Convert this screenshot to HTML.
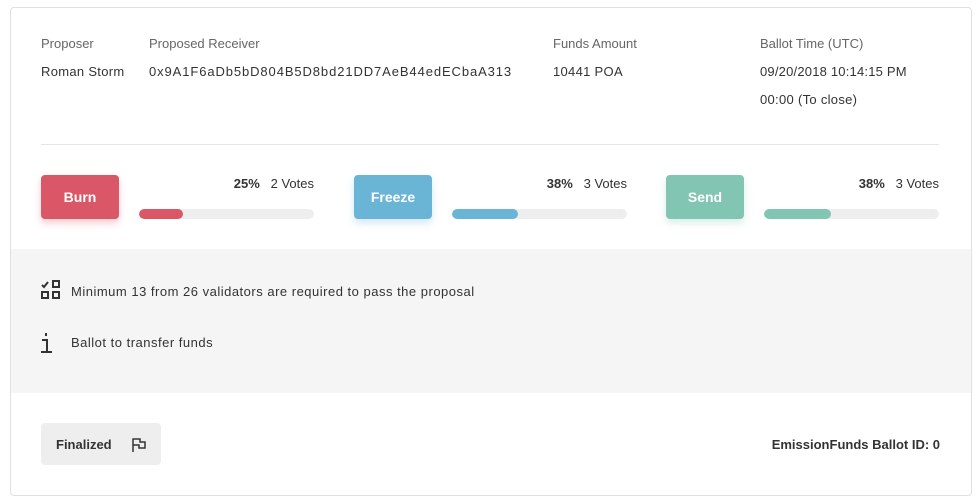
<!DOCTYPE html><html><head><style>
body{margin:0;background:#fff;font-family:"Liberation Sans",sans-serif;color:#333;width:979px;height:502px;position:relative;overflow:hidden}
.card{position:absolute;left:10px;top:7px;width:960px;height:487px;border:1px solid #e0e0e0;border-radius:4px;background:#fff;overflow:hidden}
.t{position:absolute;font-size:13px;white-space:nowrap}
.lbl{color:#666}
.btn{position:absolute;top:167px;width:78px;height:44px;border-radius:4px;color:#fff;font-weight:bold;font-size:14px;text-align:center;line-height:44px}
.bar{position:absolute;top:201px;width:175px;height:10px;border-radius:5px;background:#eee;overflow:hidden}
.bar div{height:10px;border-radius:5px}
.vt{position:absolute;top:168px;font-size:13px;text-align:right;width:175px}
</style></head><body><div class="card">
<div class="t lbl" style="left:30px;top:28px">Proposer</div>
<div class="t lbl" style="left:138px;top:28px">Proposed Receiver</div>
<div class="t lbl" style="left:542px;top:28px">Funds Amount</div>
<div class="t lbl" style="left:749px;top:28px">Ballot Time (UTC)</div>
<div class="t" style="left:30px;top:56px;letter-spacing:0.3px">Roman Storm</div>
<div class="t" style="left:138px;top:56px;letter-spacing:0.9px">0x9A1F6aDb5bD804B5D8bd21DD7AeB44edECbaA313</div>
<div class="t" style="left:542px;top:56px;letter-spacing:0.3px">10441 POA</div>
<div class="t" style="left:749px;top:56px;letter-spacing:0.2px">09/20/2018 10:14:15 PM</div>
<div class="t" style="left:749px;top:84px;letter-spacing:0.3px">00:00 (To close)</div>
<div style="position:absolute;left:30px;top:136px;width:898px;height:1px;background:#e5e5e5"></div>
<div class="btn" style="left:30px;background:#d95767;box-shadow:0 4px 8px rgba(217,87,103,.3)">Burn</div>
<div class="vt" style="left:128px"><b>25%</b>&nbsp;&nbsp; 2 Votes</div>
<div class="bar" style="left:128px"><div style="width:44px;background:#d95767"></div></div>
<div class="btn" style="left:343px;background:#6ab4d6;box-shadow:0 4px 8px rgba(106,180,214,.3)">Freeze</div>
<div class="vt" style="left:441px"><b>38%</b>&nbsp;&nbsp; 3 Votes</div>
<div class="bar" style="left:441px"><div style="width:66px;background:#6ab4d6"></div></div>
<div class="btn" style="left:655px;background:#83c5b3;box-shadow:0 4px 8px rgba(131,197,179,.3)">Send</div>
<div class="vt" style="left:753px"><b>38%</b>&nbsp;&nbsp; 3 Votes</div>
<div class="bar" style="left:753px"><div style="width:67px;background:#83c5b3"></div></div>
<div style="position:absolute;left:0;top:241px;width:960px;height:144px;background:#f5f5f5"></div>
<svg style="position:absolute;left:30px;top:272px" width="20" height="20" viewBox="0 0 20 20" fill="none" stroke="#333" stroke-width="2"><path d="M1 5l2 2 4-5"/><rect x="12" y="1" width="6" height="6"/><rect x="1" y="12" width="6" height="6"/><rect x="12" y="12" width="6" height="6"/></svg>
<div class="t" style="left:60px;top:276px;letter-spacing:0.5px">Minimum 13 from 26 validators are required to pass the proposal</div>
<svg style="position:absolute;left:29px;top:324px" width="14" height="22" viewBox="0 0 14 22" fill="none" stroke="#333" stroke-width="2"><path d="M6 1v3M2 8h5v12M1 20h11"/></svg>
<div class="t" style="left:60px;top:327px;letter-spacing:0.5px">Ballot to transfer funds</div>
<div style="position:absolute;left:30px;top:415px;width:120px;height:42px;border-radius:4px;background:#eee"></div>
<div class="t" style="left:45px;top:429px;font-weight:bold">Finalized</div>
<svg style="position:absolute;left:120px;top:429px" width="16" height="16" viewBox="0 0 16 16" fill="none" stroke="#333" stroke-width="1.5"><path d="M2 15V2h7v3h5v6H8V8H2"/></svg>
<div class="t" style="right:31px;top:429px;font-weight:bold">EmissionFunds Ballot ID: 0</div>
</div></body></html>
